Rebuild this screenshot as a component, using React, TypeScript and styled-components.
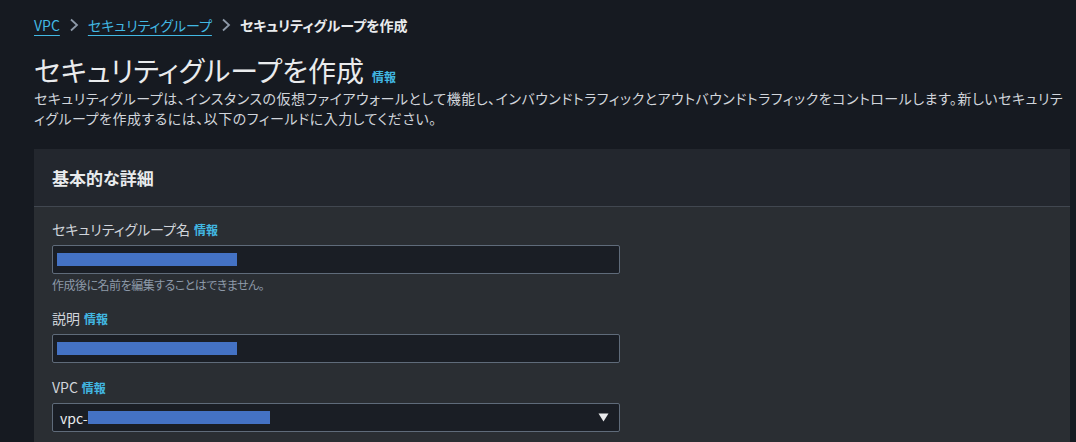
import React from "react";
import styled, { createGlobalStyle } from "styled-components";

const GlobalStyle = createGlobalStyle`
  html, body {
    margin: 0;
    padding: 0;
    background: #161a21;
  }
  body {
    font-family: "Noto Sans CJK JP", "Noto Sans", "Liberation Sans", sans-serif;
    font-feature-settings: "palt";
    color: #d1d5db;
  }
`;

const Page = styled.div`
  width: 1076px;
  height: 442px;
  overflow: hidden;
  box-sizing: border-box;
  padding: 12px 6px 0 34px;
  display: flex;
  flex-direction: column;
`;

const Breadcrumbs = styled.nav`
  display: flex;
  align-items: center;
  gap: 9px;
  height: 26px;
  font-size: 14px;
`;

const Crumb = styled.a`
  color: #42b8e3;
  text-decoration: underline;
  text-underline-offset: 4px;
  text-decoration-thickness: 1px;
`;

const CurrentCrumb = styled.span`
  color: #e9ebed;
  font-weight: 700;
`;

const Chevron = () => (
  <svg width="10" height="14" viewBox="0 0 10 14" fill="none">
    <polyline points="2,1.5 8,7 2,12.5" stroke="#8d99a8" strokeWidth="1.8" />
  </svg>
);

const TitleRow = styled.div`
  display: flex;
  align-items: baseline;
  gap: 8px;
  margin-top: 14px;
`;

const Title = styled.h1`
  margin: 0;
  font-size: 28px;
  font-weight: 400;
  line-height: 36px;
  color: #e9ebed;
`;

const InfoLink = styled.a`
  color: #42b8e3;
  font-size: 12px;
  font-weight: 700;
  text-decoration: none;
`;

const Description = styled.p`
  margin: 0;
  font-size: 14px;
  line-height: 20px;
  letter-spacing: 0.52px;
  color: #d1d5db;
  padding-right: 6px;
`;

const Panel = styled.section`
  margin-top: 21px;
  background: #2a2e33;
  display: flex;
  flex-direction: column;
  flex: 1;
`;

const PanelHeader = styled.header`
  height: 58px;
  box-sizing: border-box;
  display: flex;
  align-items: center;
  padding: 0 18px;
  background: #23272e;
  border-bottom: 1px solid #414750;
`;

const PanelTitle = styled.h2`
  margin: 0;
  font-size: 17px;
  font-weight: 700;
  color: #e9ebed;
`;

const PanelBody = styled.div`
  padding: 12px 18px 0;
  display: flex;
  flex-direction: column;
  gap: 14px;
`;

const Field = styled.div`
  display: flex;
  flex-direction: column;
`;

const Label = styled.label`
  display: flex;
  align-items: baseline;
  gap: 4px;
  font-size: 14px;
  line-height: 20px;
  color: #d1d5db;
  margin-bottom: 5px;
`;

const InputBox = styled.div`
  width: 568px;
  height: 29px;
  box-sizing: border-box;
  border: 1px solid #5f6b7a;
  border-radius: 2px;
  background: #1a1e25;
  display: flex;
  align-items: center;
  padding: 0 4px;
  font-size: 14px;
  color: #e9ebed;
`;

const Redaction = styled.span<{ $width: number }>`
  display: inline-block;
  width: ${(p) => p.$width}px;
  height: 13px;
  background: #4472c4;
`;

const SelectBox = styled(InputBox)`
  padding: 0 10px 0 7px;
  justify-content: space-between;
`;

const SelectValue = styled.span`
  display: flex;
  align-items: center;
`;

const Hint = styled.div`
  font-size: 12px;
  line-height: 18px;
  letter-spacing: -0.5px;
  color: #8d99a8;
  margin-top: 2px;
`;

const Caret = () => (
  <svg width="11" height="9" viewBox="0 0 11 9">
    <polygon points="0.5,0.5 10.5,0.5 5.5,8.5" fill="#e9ebed" />
  </svg>
);

export default function App() {
  return (
    <>
      <GlobalStyle />
      <Page>
        <Breadcrumbs>
          <Crumb>VPC</Crumb>
          <Chevron />
          <Crumb>セキュリティグループ</Crumb>
          <Chevron />
          <CurrentCrumb>セキュリティグループを作成</CurrentCrumb>
        </Breadcrumbs>
        <TitleRow>
          <Title>セキュリティグループを作成</Title>
          <InfoLink>情報</InfoLink>
        </TitleRow>
        <Description>
          セキュリティグループは、インスタンスの仮想ファイアウォールとして機能し、インバウンドトラフィックとアウトバウンドトラフィックをコントロールします。新しいセキュリティグループを作成するには、以下のフィールドに入力してください。
        </Description>
        <Panel>
          <PanelHeader>
            <PanelTitle>基本的な詳細</PanelTitle>
          </PanelHeader>
          <PanelBody>
            <Field>
              <Label>
                セキュリティグループ名 <InfoLink>情報</InfoLink>
              </Label>
              <InputBox>
                <Redaction $width={180} />
              </InputBox>
              <Hint>作成後に名前を編集することはできません。</Hint>
            </Field>
            <Field>
              <Label>
                説明 <InfoLink>情報</InfoLink>
              </Label>
              <InputBox>
                <Redaction $width={180} />
              </InputBox>
            </Field>
            <Field>
              <Label>
                VPC <InfoLink>情報</InfoLink>
              </Label>
              <SelectBox>
                <SelectValue>
                  vpc-
                  <Redaction $width={182} />
                </SelectValue>
                <Caret />
              </SelectBox>
            </Field>
          </PanelBody>
        </Panel>
      </Page>
    </>
  );
}
